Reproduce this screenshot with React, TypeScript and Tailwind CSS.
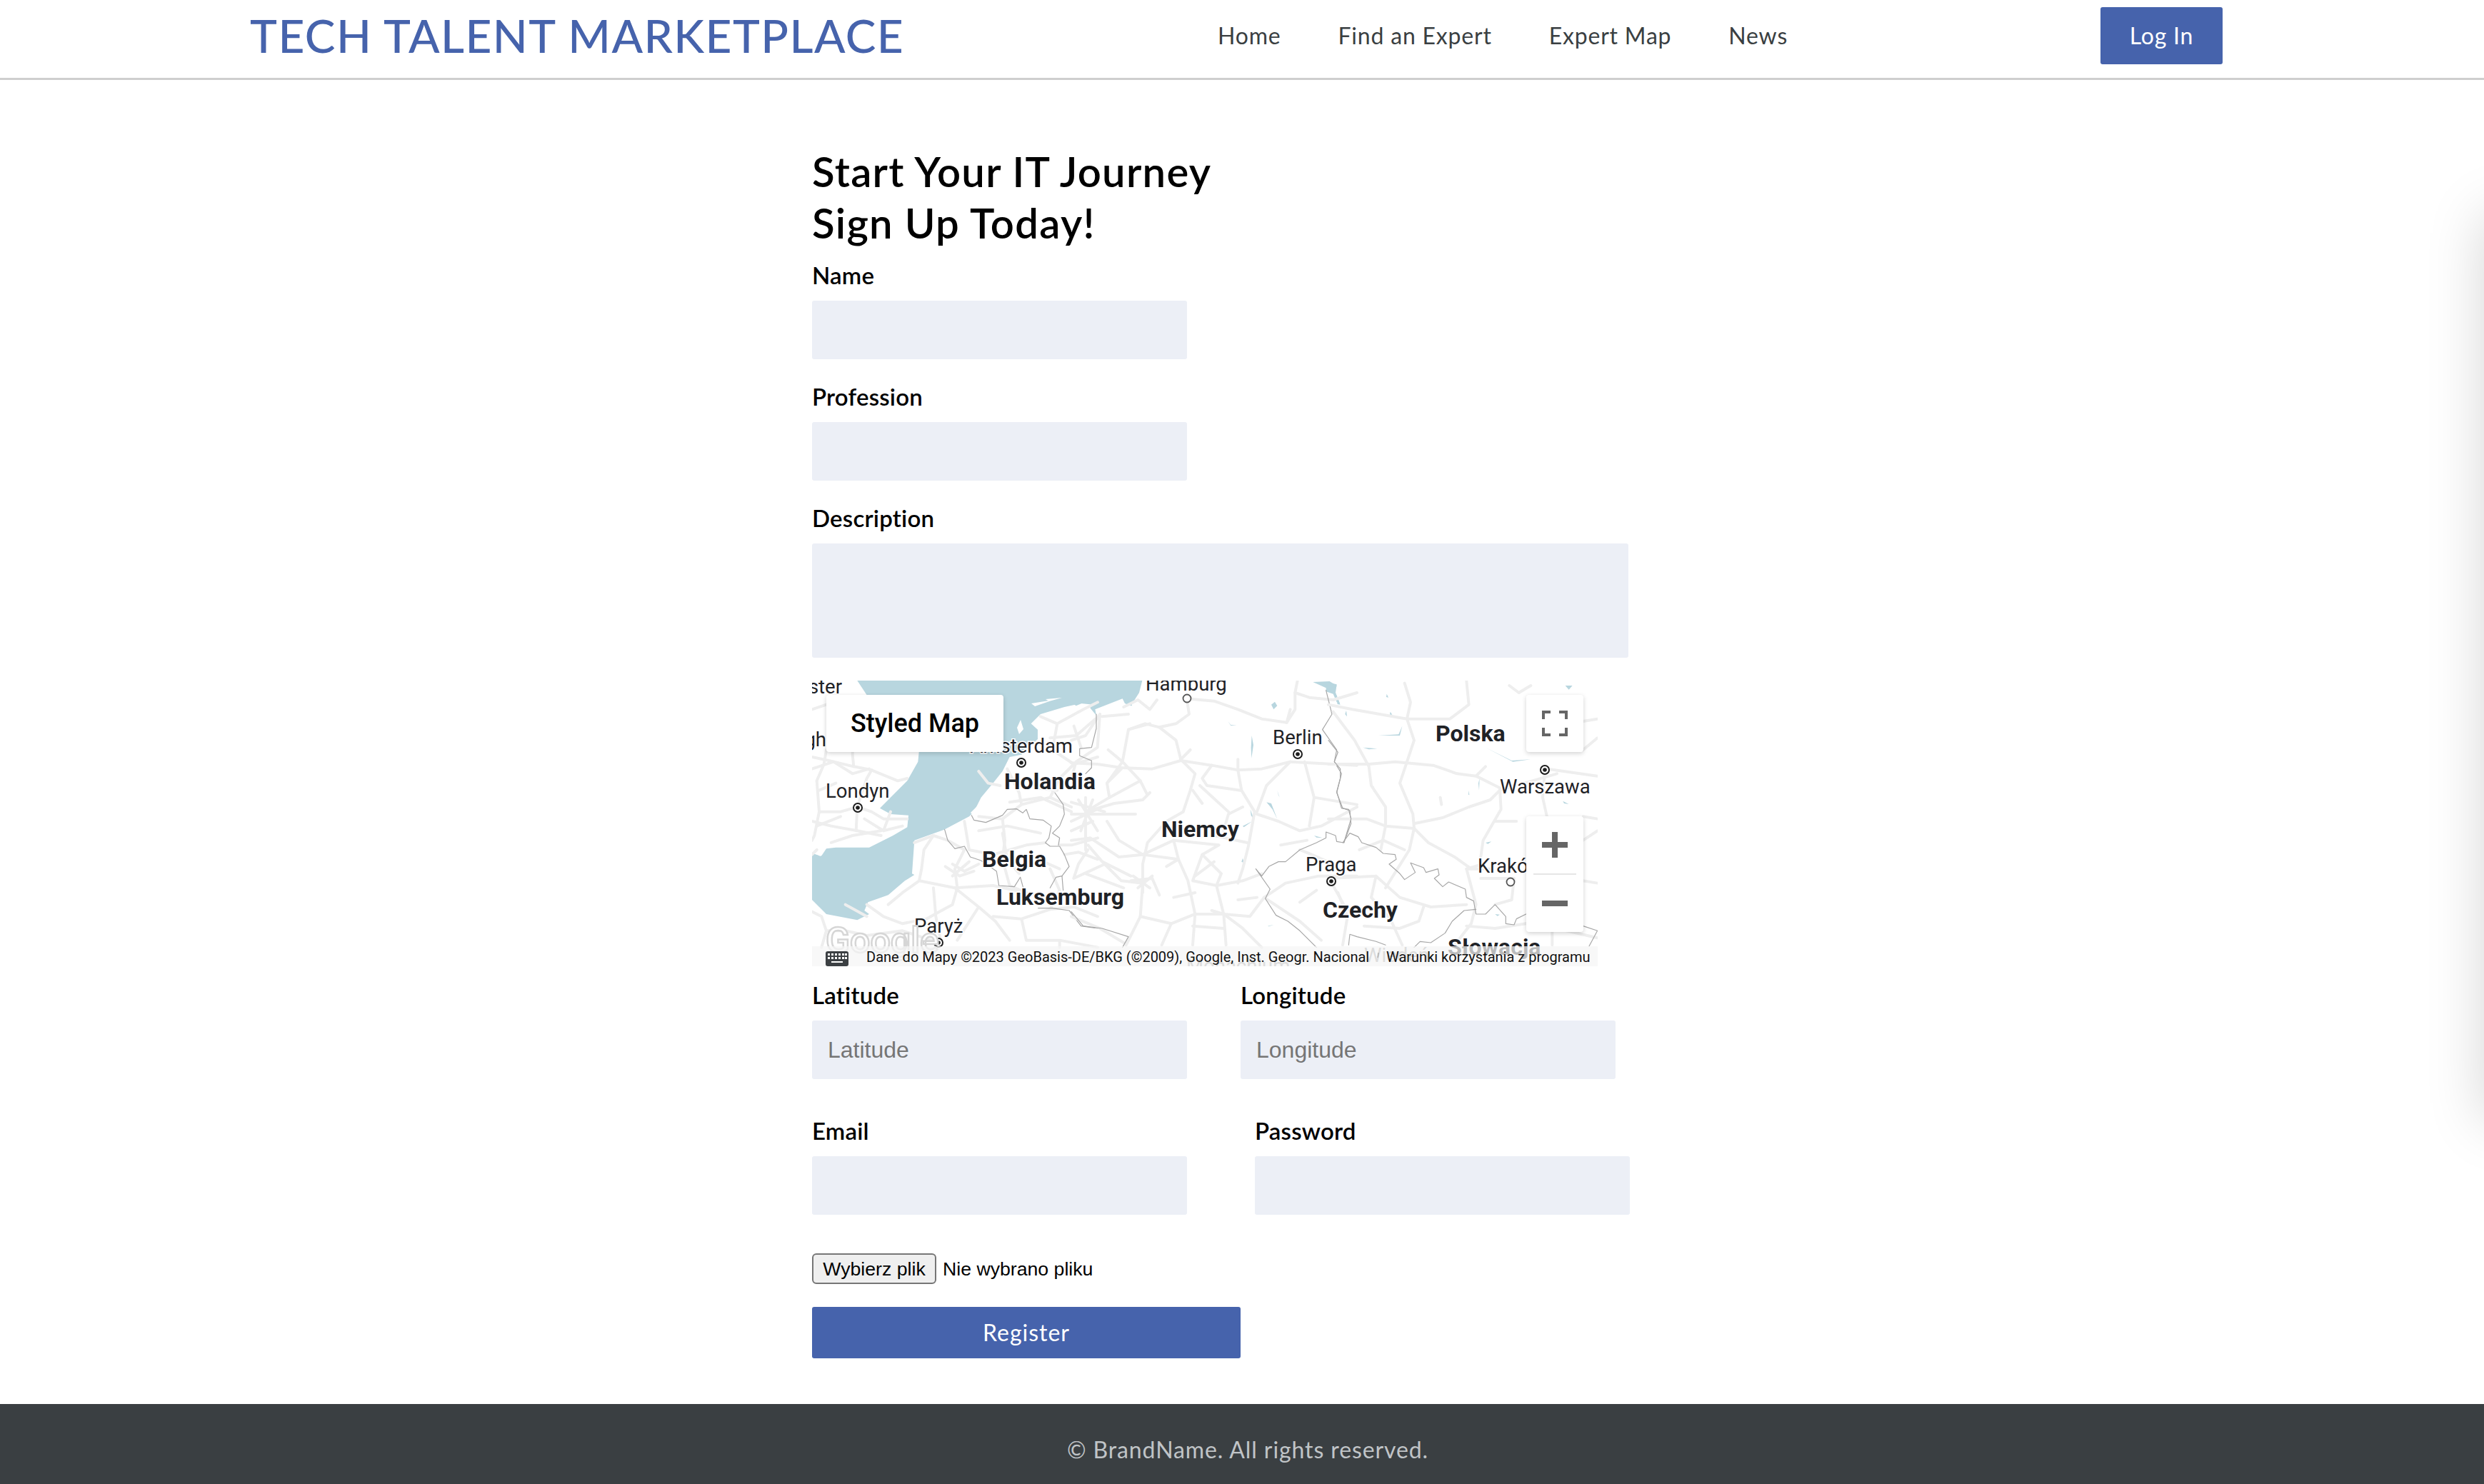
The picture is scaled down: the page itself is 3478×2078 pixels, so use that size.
import React from 'react';

// map traces are written in the coordinates of three 3x crops, then scaled down
const roadsLeft = [
  'M0 130 L60 110 L130 150 L175 170 L170 320 L175 370 L250 385 L230 420 L190 540',
  'M0 330 L70 345 L175 370 M20 430 L30 560 L10 660 L0 680',
  'M190 540 L120 560 L30 560 M190 540 L250 560 L300 590 L400 590 M190 540 L185 640',
  'M60 300 L50 360 L20 430 M250 385 L360 430 L400 420',
  'M20 620 L120 580 M80 690 L170 660 L290 640',
  'M430 690 L510 660 L570 680 L640 720 L600 800 L610 880 L590 950 L480 1010 L380 1030 L300 1000 L230 950',
  'M510 660 L470 720 L460 800 L450 850 L380 900 L320 950 M450 850 L600 880 L760 870 L900 900',
  'M600 880 L700 960 L770 1020 L830 1100 M510 880 L520 1000 L540 1100 M700 960 L610 1100',
  'M590 780 L640 810 L700 780 M560 790 L620 830 L680 810 M590 830 L660 770',
  'M640 600 L660 720 L760 740 L900 700 L980 690 M800 590 L810 680 L800 760 L830 870 L900 900',
  'M0 980 L40 1000 L60 1060 L140 1060 L230 1080 L380 1060 L530 1110 M60 1060 L40 1130',
  'M820 380 L870 480 L880 530 L800 590 L700 580 M880 530 L1000 500 L1090 540 M1000 500 L1040 420 L1100 360',
  'M1200 100 L1140 130 L1030 190 L960 160 M1030 190 L1010 300 L1100 360 L1200 330 M1100 200 L1130 290',
  'M1040 700 L1090 700 L1200 670 M1060 740 L1120 730 L1200 760 M1000 800 L1040 890 L1000 970 L1100 960 L1200 1000',
  'M760 1000 L880 1010 L1000 970 M880 1010 L900 1100 L1040 1100 L1200 1130 M1040 1100 L1040 1130',
  'M700 390 L740 440 L790 450 M20 720 L0 740 M230 1000 L140 950',
  'M0 380 L90 350 L170 400 L240 380 M30 470 L100 440 M220 590 L300 640 L330 560 M300 640 L380 620',
  'M0 600 L80 620 L190 640 L290 660 M1000 250 L1110 240 L1190 170 M940 460 L1030 470',
  'M830 520 L960 500 L1090 560 M700 640 L820 620 L960 650 M800 650 L820 760 L870 820 M950 760 L1040 800',
];

const roadsMid = [
  'M485 85 L495 150 L440 190 L370 205 L310 190 L240 215 L215 350 L150 440 L160 500 L60 560',
  'M485 85 L600 95 L700 130 L800 170 L905 185 L940 130 L940 60 L950 10',
  'M370 205 L440 260 L460 340 L520 400 L500 470 L470 560',
  'M0 355 L110 360 L210 375 L340 380 L460 345 L590 365 L700 385 L800 380 L920 350 L1200 365',
  'M700 340 L700 385 L715 470 L770 560 L745 700 L720 800 L700 860',
  'M470 560 L400 600 L320 690 L300 780 L300 860',
  'M60 560 L180 525 L300 510 L330 480 M160 500 L290 430 L320 490',
  'M150 600 L200 680 L300 740 L430 680 L450 760 L490 850 L520 990 L510 1120',
  'M430 680 L620 700 L550 740 L510 850 L610 870 L720 850 L800 820',
  'M550 740 L630 820 L610 870 L640 990 L720 1050 L800 1130',
  'M780 570 L870 600 L960 640 L1050 620 L1200 540',
  'M920 350 L820 450 L780 560 M980 350 L1020 500 L1000 620',
  'M300 860 L290 1000 L420 1030 L520 990 L640 990 L750 1000 L810 920',
  'M0 680 L80 670 L200 750 L300 740 L450 760',
  'M590 365 L550 420 L570 450 L710 470 M460 340 L500 300 M510 470 L550 525',
  'M0 520 L140 560 M0 600 L130 540 M30 510 L110 640 M90 510 L40 640 M0 570 L180 570 L270 570 M60 500 L60 720 M0 640 L90 600',
  'M70 720 L30 780 L10 840 L140 780 L210 850 L300 860 M70 700 L130 770 L250 830 M60 820 L220 880',
  'M250 850 L340 840 L370 910 M260 830 L330 880 M280 880 L340 830 M300 820 L300 900',
  'M0 1000 L120 1050 L220 1110 M290 1000 L230 1120 M420 1030 L380 1120 M640 990 L590 975 M640 990 L650 1120',
  'M810 920 L900 860 L1040 830 L1200 830 M1100 870 L1150 960 L1200 1000 M960 940 L1030 890 M810 920 L960 1020 L1050 1100',
  'M1020 500 L1200 530 M905 185 L920 130 M1200 60 L1100 90 L1000 80 L940 60 M1100 780 L1010 740 L960 720',
  'M220 120 L280 90 L330 130 L360 90 M130 160 L240 150 M120 150 L110 290 L20 350 L0 420 M0 260 L60 240 L120 150',
  'M155 300 L215 350 L290 430 M240 215 L330 190 M150 440 L210 380 M540 450 L660 560 M720 540 L660 570 L640 640',
  'M600 660 L740 690 M880 700 L990 680 M400 790 L450 760 M520 830 L600 770 M430 920 L520 900 M700 930 L780 920 M510 1040 L640 1050',
];

const roadsRight = [
  'M0 110 L100 130 L330 170 L510 170 L590 110 L580 10 M320 20 L345 100 L330 170 L360 260 L320 380 L300 440 L355 570 L360 630',
  'M0 360 L170 360 L280 350 L440 365 L540 400 L620 410 L720 460 M720 460 L725 550 L650 680 L640 750',
  'M360 610 L480 585 L590 540 L680 510 L720 470 M360 630 L420 690 L530 750 L600 800 M360 630 L340 720 L290 800 L240 880',
  'M20 140 L110 260 L170 370 L180 450 L240 540 L240 620 L220 720',
  'M0 590 L160 590 L240 620 L360 630 M910 385 L900 500 L920 590 M760 30 L800 60 L850 30 M920 380 L1130 410',
  'M620 410 L660 370 M470 500 L475 530 M650 780 L580 800 L620 950 L600 1030 L530 1120',
  'M640 840 L780 840 L770 930 L700 950 M1070 850 L1130 860 M830 1030 L1000 1060 L1130 1090 M940 1060 L940 1120',
  'M0 840 L200 830 L300 920 L430 960 L580 950 M200 830 L180 920 L260 1010 L310 1120 M40 900 L80 1000 L60 1120',
  'M400 960 L380 1020 L300 1050 L150 1040 M580 1040 L700 1050 L830 1030 M1070 300 L1130 250 M1070 180 L1130 170',
  'M720 470 L960 400 M1070 580 L1130 590 M1070 680 L1130 640',
  'M130 720 L230 680 L320 720 M700 600 L790 600 M960 620 L1060 690 M580 800 L680 800',
];

const bordersLeft = [
  'M670 575 L680 595 L730 605 L800 575 L820 550 L860 548 L885 565 L900 550 L915 590 L970 595 L1005 620 L995 670 L980 690 L1000 705 L1040 705 L1060 740 L1080 790 L1050 830 L1025 835 L1000 880',
  'M557 635 L570 680 L600 715 L640 705 L665 750 L710 765 L775 810 L785 870 L850 875 L875 835 L890 890',
  'M1050 830 L1055 890 M950 965 L1010 965 L1080 975 L1130 1040 L1200 1050',
  'M1020 480 L1055 530 L1060 570 L1040 620 L1010 650 L1040 670 L1035 700',
];

const bordersMid = [
  'M105 150 L105 210 L85 290 L35 295 L35 325 L85 345 L85 375 L60 400',
  'M0 980 L50 1040 L130 1050 L240 1085 L215 1130',
  'M1070 50 L1095 150 L1055 215 L1115 300 L1105 350 L1135 400 L1115 480 L1140 545 L1170 555 L1175 610 L1145 690 L1115 685 L1110 660 L1070 645 L1070 670 L1030 690 L960 720 L900 770 L870 770 L830 790 L800 830 L775 800 L835 885 L815 925 L860 995 L910 1020 L960 1060 L1030 1130',
];

const bordersRight = [
  'M60 690 L90 650 L125 665 L140 690 L200 710 L230 735 L280 740 L285 760 L255 780 L300 820 L320 845 L365 815 L345 775 L400 795 L410 815 L460 800 L465 825 L445 840 L480 875 L505 855 L575 885 L580 920 L610 935 L620 990 L660 990 L700 950 L745 1000 L745 1030 L780 1035 L790 1010 L830 990',
  'M85 1120 L90 1075 L120 1085 L200 1105 L240 1120 M620 970 L570 975 L520 1020 L490 1070 L430 1110 L385 1105 L360 1130',
  'M1070 1040 L1130 1060 L1095 1125 M0 260 L40 310 L25 350 L50 380 L50 420 L35 475 L55 545 L85 550 L95 590 L65 690',
];

const mapLabels: { text: string; x: number; y: number; bold?: boolean; anchor?: 'end'; muted?: boolean }[] = [
  { text: 'ster', x: 42, y: 18, anchor: 'end' },
  { text: 'gh', x: 20, y: 92, anchor: 'end' },
  { text: 'Amsterdam', x: 365, y: 101, anchor: 'end' },
  { text: 'Londyn', x: 19, y: 164 },
  { text: 'Holandia', x: 269, y: 152, bold: true },
  { text: 'Belgia', x: 238, y: 261, bold: true },
  { text: 'Luksemburg', x: 258, y: 314, bold: true },
  { text: 'Paryż', x: 143, y: 353 },
  { text: 'Hamburg', x: 467, y: 14 },
  { text: 'Niemcy', x: 489, y: 219, bold: true },
  { text: 'Berlin', x: 645, y: 89 },
  { text: 'Praga', x: 691, y: 267 },
  { text: 'Czechy', x: 715, y: 332, bold: true },
  { text: 'Polska', x: 873, y: 85, bold: true },
  { text: 'Warszawa', x: 963, y: 158 },
  { text: 'Kraków', x: 932, y: 269 },
  { text: 'Słowacja', x: 890, y: 384, bold: true },
  { text: 'Wiedeń', x: 773, y: 394, muted: true },
  { text: 'Monachium', x: 524, y: 409, muted: true },
];

const cityDots: { x: number; y: number; hollow?: boolean }[] = [
  { x: 293, y: 115 },
  { x: 64, y: 178 },
  { x: 177, y: 367 },
  { x: 525, y: 25, hollow: true },
  { x: 680, y: 103 },
  { x: 727, y: 281 },
  { x: 1026, y: 125 },
  { x: 978, y: 282, hollow: true },
];

const Trace: React.FC<{ dx: number; roads: string[]; borders: string[] }> = ({ dx, roads, borders }) => (
  <g transform={`translate(${dx} -3) scale(0.3333)`} fill="none" strokeLinejoin="round" strokeLinecap="round">
    {roads.map((d, i) => <path key={i} d={d} stroke="#eeeeee" strokeWidth={12} />)}
    {borders.map((d, i) => <path key={i} d={d} stroke="#a6a6a6" strokeWidth={3.5} />)}
  </g>
);

const MapPanel = () => (
  <div className="relative mt-[32px] h-[400px] w-[1100px] overflow-hidden bg-white font-['Roboto',sans-serif]">
    <svg viewBox="0 0 1100 400" className="absolute inset-0 h-full w-full">
      <g transform="translate(0 -3) scale(0.3333)" fill="#b8d6df">
        <path d="M190 9 L1200 9 L1170 90 L1180 110 L1130 105 L1060 120 L960 150 L920 190 L948 215 L948 255 L880 320 L830 330 L800 390 L760 440 L710 500 L680 560 L660 580 L555 635 L430 680 L420 820 L430 825 L390 850 L320 910 L235 940 L220 975 L240 990 L190 1015 L60 990 L30 960 L0 930 L0 735 L40 745 L60 715 L100 710 L240 710 L340 660 L400 625 L405 575 L330 570 L285 545 L340 490 L400 430 L445 350 L450 300 L230 70 Z" />
      </g>
      <g transform="translate(363 -3) scale(0.3333)" fill="#b8d6df">
        <path d="M-30 9 L298 9 L285 60 L250 115 L225 105 L215 85 L100 130 L105 155 L80 125 L80 90 L20 115 L-30 80 Z" />
        <path d="M1015 15 L1085 12 L1115 30 L1105 60 L1070 40 Z M840 110 L855 98 L865 115 L850 130 Z M230 90 L250 80 L255 115 L232 110 Z" />
        <path d="M1110 60 L1130 110 L1118 108 Z M658 180 L670 195 L695 195 L670 198 Z M758 240 L765 280 L757 335 L755 290 Z M865 470 L875 500 L870 490 Z M820 520 L840 525 L865 590 L845 550 Z M1020 660 L1055 670 L1030 668 Z M720 620 L760 600 L725 625 Z M752 550 L768 595 L755 575 Z M720 755 L725 775 L715 770 Z M825 1040 L850 1035 L830 1042 Z" />
      </g>
      <g transform="translate(723 -3) scale(0.3333)" fill="#b8d6df">
        <path d="M-10 15 L35 25 L30 60 L48 105 L35 100 L20 65 L-10 55 Z M995 30 L1025 30 L1010 47 Z M245 65 L252 80 L243 78 Z M75 135 L78 160 L70 150 Z M260 140 L268 152 L258 152 Z M145 290 L205 295 L170 298 Z M210 240 L295 235 L310 200 L300 240 Z M660 290 L770 345 L850 340 L775 350 Z M190 450 L195 480 L190 475 Z M630 440 L635 420 L633 470 Z M590 470 L592 490 L588 488 Z M985 515 L1010 528 L990 525 Z M660 690 L685 685 L670 695 Z M700 990 L720 992 L710 998 Z" />
      </g>
      <g fill="#ffffff">
        <path d="M307 32 L338 27 L312 36 Z M327 26 L350 24 L332 29 Z" />
        <path d="M287 66 L292 55 L296 68 L290 75 Z M7 234 L20 232 L12 246 L0 241 Z" />
        <path d="M242 165 L250 168 L232 180 L227 188 L240 190 L250 182 L256 186 L232 196 L222 185 Z" />
      </g>
      <Trace dx={0} roads={roadsLeft} borders={bordersLeft} />
      <Trace dx={363} roads={roadsMid} borders={bordersMid} />
      <Trace dx={723} roads={roadsRight} borders={bordersRight} />
      {cityDots.map(d => d.hollow ? (
        <circle key={d.x} cx={d.x} cy={d.y} r={5.5} fill="#fff" stroke="#555" strokeWidth={1.8} />
      ) : (
        <g key={d.x}>
          <circle cx={d.x} cy={d.y} r={6} fill="#fff" stroke="#1c1c1c" strokeWidth={2} />
          <circle cx={d.x} cy={d.y} r={2.8} fill="#1c1c1c" />
        </g>
      ))}
      {mapLabels.map(l => (
        <text
          key={l.text}
          x={l.x}
          y={l.y}
          textAnchor={l.anchor}
          fontSize={l.bold ? 32 : 27.5}
          fontWeight={l.bold ? 700 : 400}
          fill={l.muted ? '#9a9a9a' : '#1f2226'}
          stroke="#fff"
          strokeWidth={3}
          paintOrder="stroke"
        >
          {l.text}
        </text>
      ))}
      <text x={19} y={381} fontSize={50} fontWeight={500} fill="#fff" stroke="#d6d6d6" strokeWidth={2.5}>Google</text>
      <rect x={0} y={372} width={1100} height={28} fill="#f5f5f5" fillOpacity={0.72} />
      <g fill="#3c4043">
        <path d="M22 379 H48 A3 3 0 0 1 51 382 V397 A3 3 0 0 1 48 400 H22 A3 3 0 0 1 19 397 V382 A3 3 0 0 1 22 379 Z" />
      </g>
      <g fill="#fff">
        <rect x={22} y={382} width={3} height={3} /><rect x={27} y={382} width={3} height={3} /><rect x={32} y={382} width={3} height={3} /><rect x={37} y={382} width={3} height={3} /><rect x={42} y={382} width={3} height={3} /><rect x={46} y={382} width={3} height={3} />
        <rect x={22} y={387} width={3} height={3} /><rect x={27} y={387} width={3} height={3} /><rect x={32} y={387} width={3} height={3} /><rect x={37} y={387} width={3} height={3} /><rect x={42} y={387} width={3} height={3} /><rect x={46} y={387} width={3} height={3} />
        <rect x={27} y={393} width={16} height={2} />
      </g>
      <text x={76} y={394} fontSize={20} fill="#111">Dane do Mapy ©2023 GeoBasis-DE/BKG (©2009), Google, Inst. Geogr. Nacional</text>
      <path d="M793 381 L792 388" stroke="#999" strokeWidth={1} />
      <text x={804} y={394} fontSize={20} fill="#111">Warunki korzystania z programu</text>
    </svg>
    <div className="absolute left-[20px] top-[20px] flex h-[80px] w-[248px] items-center justify-center rounded-[4px] bg-white text-[36px] font-medium text-black shadow-[0_2px_6px_rgba(0,0,0,0.18)]">
      Styled Map
    </div>
    <div className="absolute left-[1000px] top-[20px] flex h-[80px] w-[80px] items-center justify-center rounded-[4px] bg-white shadow-[0_2px_6px_rgba(0,0,0,0.18)]">
      <svg viewBox="0 0 18 18" className="h-[36px] w-[36px]" fill="#666">
        <path d="M0 0v6h2V2h4V0H0zm16 0h-4v2h4v4h2V0h-2zm0 16h-4v2h6v-6h-2v4zM2 12H0v6h6v-2H2v-4z" />
      </svg>
    </div>
    <div className="absolute left-[1000px] top-[190px] flex h-[162px] w-[80px] flex-col items-center rounded-[4px] bg-white shadow-[0_2px_6px_rgba(0,0,0,0.18)]">
      <div className="flex h-[80px] items-center justify-center">
        <svg viewBox="0 0 18 18" className="h-[36px] w-[36px]" fill="#666"><path d="M18 7h-7V0H7v7H0v4h7v7h4v-7h7z" /></svg>
      </div>
      <div className="h-[2px] w-[60px] bg-[#e6e6e6]" />
      <div className="flex h-[80px] items-center justify-center">
        <svg viewBox="0 0 18 18" className="h-[36px] w-[36px]" fill="#666"><path d="M0 7h18v4H0z" /></svg>
      </div>
    </div>
  </div>
);

const inputClass = 'block h-[82px] rounded-[3px] bg-[#eceff6] px-[22px] font-["Liberation_Sans",sans-serif] text-[32px] outline-none placeholder:text-[#757575]';
const labelClass = 'mb-[13px] block h-[46px] text-[33px] font-semibold leading-[46px] tracking-[0.2px] text-black';

const Field: React.FC<{ label: string; placeholder?: string; className?: string }> = ({ label, placeholder, className = '' }) => (
  <div className={className}>
    <label className={labelClass}>{label}</label>
    <input placeholder={placeholder} className={`${inputClass} w-[525px]`} />
  </div>
);

export default function App() {
  return (
    <div className="relative h-[2078px] overflow-hidden bg-white font-['Lato',sans-serif]">
      <div className="absolute left-full top-[300px] h-[1270px] w-[100px] shadow-[0_0_80px_rgba(0,0,0,0.17)]" />

      <header className="h-[112px] border-b-[3px] border-[#cfcfcf] pt-[10px]">
        <div className="flex h-[80px] items-center pl-[350px] pr-[366px]">
          <div className="w-[1355px] shrink-0 text-[64px] font-medium leading-none tracking-[1.45px] text-[#4663ac]">TECH TALENT MARKETPLACE</div>
          <nav className="flex gap-[80px] text-[32px] tracking-[0.8px] text-[#3a3f42]">
            <a>Home</a>
            <a>Find an Expert</a>
            <a>Expert Map</a>
            <a>News</a>
          </nav>
          <button className="ml-auto h-[80px] w-[171px] rounded-[3px] bg-[#4663ac] text-[32px] tracking-[0.8px] text-white">Log In</button>
        </div>
      </header>

      <main className="ml-[1137px] w-[1145px] pt-[92px]">
        <h3 className="text-[58px] font-semibold leading-[72px] tracking-[1.3px] text-black">
          Start Your IT Journey<br />Sign Up Today!
        </h3>
        <Field label="Name" className="mt-[14px]" />
        <Field label="Profession" className="mt-[29px]" />
        <div className="mt-[29px]">
          <label className={labelClass}>Description</label>
          <textarea className="block h-[160px] w-[1143px] resize-none rounded-[3px] bg-[#eceff6] outline-none" />
        </div>

        <MapPanel />

        <div className="mt-[17px] flex gap-[75px]">
          <Field label="Latitude" placeholder="Latitude" />
          <Field label="Longitude" placeholder="Longitude" />
        </div>
        <div className="mt-[49px] flex gap-[95px]">
          <Field label="Email" />
          <Field label="Password" />
        </div>

        <div className="mt-[54px] flex h-[43px] items-center gap-[9px] font-['Liberation_Sans',sans-serif] text-[26.67px] text-black">
          <button className="h-[43px] w-[174px] rounded-[6px] border-2 border-[#767676] bg-[#efefef]">Wybierz plik</button>
          <span>Nie wybrano pliku</span>
        </div>
        <button className="mt-[32px] block h-[72px] w-[600px] rounded-[3px] bg-[#4663ac] text-[32px] tracking-[1px] text-white">Register</button>
      </main>

      <footer className="absolute inset-x-0 bottom-0 flex h-[112px] items-center justify-center bg-[#3a3f42] pl-[16px] pt-[16px] text-[32px] tracking-[0.9px] text-[#c0c4c7]">
        © BrandName. All rights reserved.
      </footer>
    </div>
  );
}
